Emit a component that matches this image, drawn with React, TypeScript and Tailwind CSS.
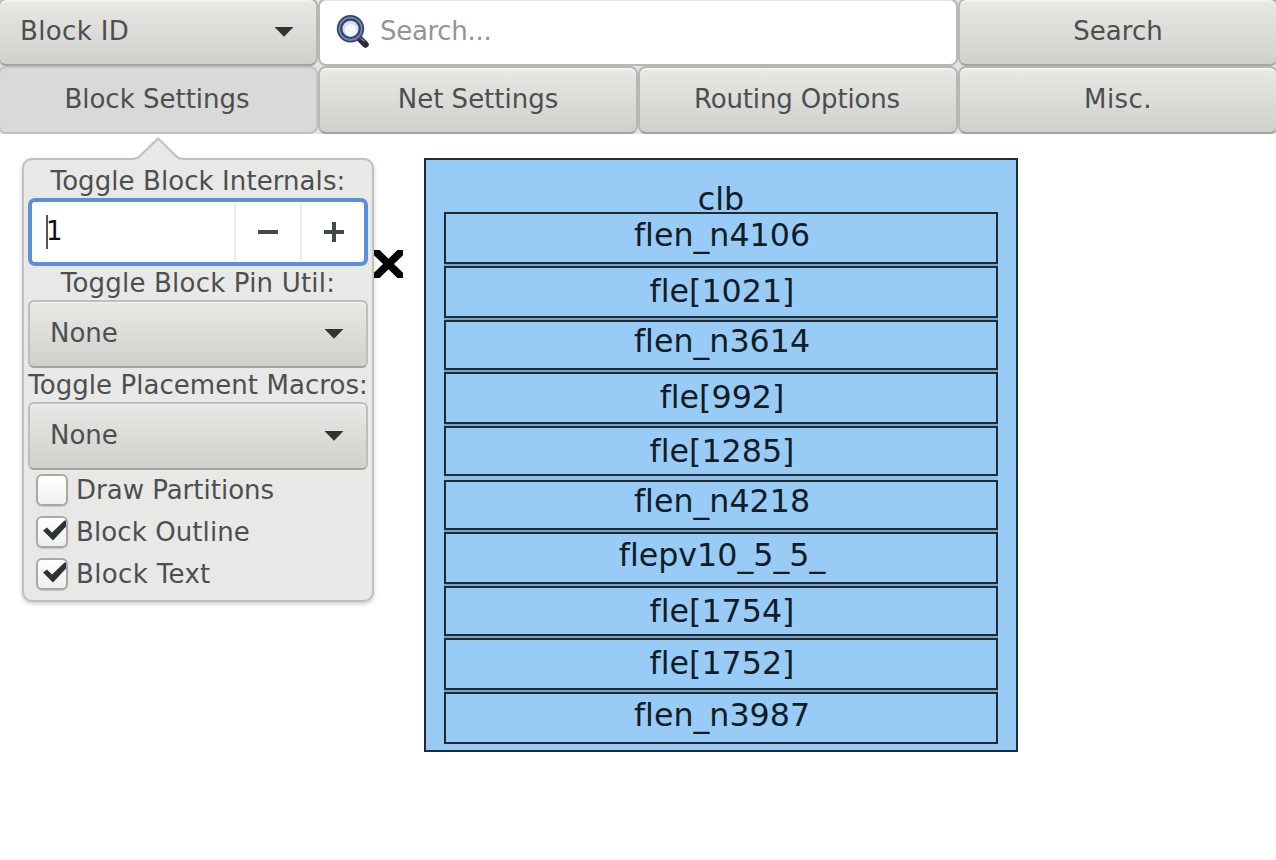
import React from "react";

const BTN =
  "flex h-[68px] w-80 shrink-0 items-center justify-center rounded-[8px] border-2 border-[#b7b7b4] border-b-[#a3a3a0] bg-linear-to-b from-[#e8e8e5] to-[#d0d0cd] shadow-[inset_0_2px_0_#f3f3f1]";

function Caret() {
  return (
    <svg width="20" height="10" viewBox="0 0 20 10" className="shrink-0">
      <path d="M0.5 0H19.5L10 9.8Z" fill="#2e3436" />
    </svg>
  );
}

function Magnifier() {
  return (
    <svg width="34" height="34" viewBox="0 0 34 34" className="shrink-0">
      <path d="M23 23L29.5 29.5" stroke="#2b2f33" strokeWidth="6.5" strokeLinecap="round" />
      <path d="M23 21.5L28 26" stroke="#7d8288" strokeWidth="1.6" strokeLinecap="round" />
      <circle cx="14.5" cy="13.8" r="10.9" fill="#d3def5" stroke="#33426f" strokeWidth="5.6" />
      <circle cx="14.5" cy="13.8" r="11.2" fill="none" stroke="#7584ac" strokeWidth="1.8" />
      <circle cx="14.8" cy="15" r="6" fill="#f3f7fe" />
    </svg>
  );
}

function Combo() {
  return (
    <div className="flex h-[68px] items-center justify-between rounded-[6px] border-2 border-[#bdbdba] border-b-[#a3a3a0] bg-linear-to-b from-[#e8e8e5] to-[#d0d0cd] pr-[22px] pl-5 shadow-[inset_0_1px_0_#f3f3f1]">
      <span className="relative -top-px">None</span>
      <Caret />
    </div>
  );
}

function Check({ label, on, c }: { label: string; on: boolean; c: string }) {
  return (
    <div className="flex h-[42px] items-center gap-2 pl-2">
      <div className="relative -top-px flex size-8 items-center justify-center rounded-[6px] border-2 border-[#a9a9a6] bg-linear-to-b from-white to-[#efefed] shadow-[0_1px_1px_#c4c4c2]">
        {on && (
          <svg width="28" height="28" viewBox="0 0 28 28" className="shrink-0">
            <path d="M5 12.5L9 9.5L14 14.5L26.5 2.5H28V8.5L15 22.5Z" fill="#2e3436" />
          </svg>
        )}
      </div>
      <span className={"relative -top-px " + c}>{label}</span>
    </div>
  );
}

const CELLS = [
  { t: "flen_n4106", c: "h-[52px] pt-[3px]" },
  { t: "fle[1021]", c: "h-[52px] pt-[5px]" },
  { t: "flen_n3614", c: "h-[50px] pt-[1px]" },
  { t: "fle[992]", c: "h-[52px] pt-[5px]" },
  { t: "fle[1285]", c: "h-[50px] pt-[5px] mb-[2px] shadow-[0_4px_0_#90c0e8]" },
  { t: "flen_n4218", c: "h-[50px] pt-[1px]" },
  { t: "flepv10_5_5_", c: "h-[52px] pt-[3px]" },
  { t: "fle[1754]", c: "h-[50px] pt-[5px]" },
  { t: "fle[1752]", c: "h-[52px] pt-[5px]" },
  { t: "flen_n3987", c: "h-[52px] pt-[3px]" },
];

export default function App() {
  return (
    <div className="relative h-[860px] w-[1276px] overflow-hidden bg-white font-['DejaVu_Sans',sans-serif] text-[26px] leading-[34px] whitespace-nowrap text-[#4c4f50]">
      <div className="-mt-[2px] -ml-[2px] flex w-[1280px] bg-[#e4e4e2]">
        <div className="flex h-[68px] w-80 items-center justify-between rounded-[8px] border-2 border-[#b7b7b4] border-b-[#a3a3a0] bg-linear-to-b from-[#e8e8e5] to-[#d0d0cd] pr-[22px] pl-5 shadow-[inset_0_2px_0_#f3f3f1]">
          <span className="relative -top-px tracking-[0.35px]">Block ID</span>
          <Caret />
        </div>
        <div className="flex h-[68px] w-[640px] items-center gap-[10px] rounded-[8px] border-2 border-[#b7b7b4] bg-white pl-4 shadow-[inset_0_1px_0_#e4e4e4]">
          <Magnifier />
          <span className="relative -top-px tracking-[-0.3px] text-[#929595]">Search...</span>
        </div>
        <div className={BTN}>
          <span className="relative -top-px">Search</span>
        </div>
      </div>
      <div className="-ml-[2px] flex w-[1280px] bg-[#e4e4e2]">
        <div className="flex h-[68px] w-80 items-center justify-center rounded-[8px] border-2 border-[#c2c2bf] bg-[#d9d9d7]">
          <span className="relative -top-px -left-px">Block Settings</span>
        </div>
        <div className={BTN}>
          <span className="relative -top-px">Net Settings</span>
        </div>
        <div className={BTN}>
          <span className="relative -top-px -left-px tracking-[-0.15px]">Routing Options</span>
        </div>
        <div className={BTN}>
          <span className="relative -top-px tracking-[0.4px]">Misc.</span>
        </div>
      </div>

      <div className="flex items-start pt-6 pl-[22px]">
        <div className="relative w-[352px] rounded-[10px] border-2 border-[#c0c0be] bg-[#e8e8e7] p-1 shadow-[0_2px_4px_rgba(0,0,0,0.2)]">
          <svg className="absolute -top-[23px] left-[109px]" width="52" height="24" viewBox="0 0 52 24">
            <path d="M0 24V22C5 22 6 20 8 18L25 1.5L42 18C44 20 45 22 51 22V24Z" fill="#e8e8e7" />
            <path d="M0 22C5 22 6 20 8 18L25 1.5L42 18C44 20 45 22 51 22" fill="none" stroke="#c0c0be" strokeWidth="2" />
          </svg>
          <div className="text-center tracking-[0.08px]">Toggle Block Internals:</div>
          <div className="flex h-[68px] items-stretch rounded-[7px] border-4 border-[#5a90d9] bg-white">
            <div className="flex flex-1 items-center pl-[14px] text-[#111]">
              <div className="h-[34px] w-[2px] bg-[#555]" />
              <span className="relative -top-px -left-[2px]">1</span>
            </div>
            <div className="flex w-[66px] items-center justify-center border-l-2 border-[#ededed]">
              <svg width="20" height="20" viewBox="0 0 20 20">
                <path d="M0 10H20" stroke="#44494b" strokeWidth="4" />
              </svg>
            </div>
            <div className="flex w-[64px] items-center justify-center border-l-2 border-[#ededed] pl-[2px]">
              <svg width="20" height="20" viewBox="0 0 20 20">
                <path d="M0 10H20M10 0V20" stroke="#44494b" strokeWidth="4" />
              </svg>
            </div>
          </div>
          <div className="text-center tracking-[0.2px]">Toggle Block Pin Util:</div>
          <Combo />
          <div className="text-center tracking-[0.06px]">Toggle Placement Macros:</div>
          <Combo />
          <Check label="Draw Partitions" on={false} c="" />
          <Check label="Block Outline" on c="tracking-[0.1px]" />
          <Check label="Block Text" on c="tracking-[0.35px]" />
        </div>

        <svg className="relative z-10 mt-[92px] shrink-0" width="29" height="28" viewBox="0 0 29 28">
          <path d="M-2 -2L31 30M31 -2L-2 30" stroke="#000" strokeWidth="7.6" />
        </svg>

        <div className="ml-[21px] h-[594px] w-[594px] border-2 border-[#1f2c36] bg-[#98cbf6] px-[18px] text-center text-[31.7px] leading-9 text-[#101c26] [font-variant-ligatures:none]">
          <div className="h-[52px] pt-[21px]">clb</div>
          <div className="flex flex-col gap-[2px] bg-[#7ba3c4]">
            {CELLS.map((c) => (
              <div key={c.t} className={"box-border border-2 border-[#1f2c36] bg-[#98cbf6] pl-[2px] " + c.c}>
                {c.t}
              </div>
            ))}
          </div>
        </div>
      </div>
    </div>
  );
}
